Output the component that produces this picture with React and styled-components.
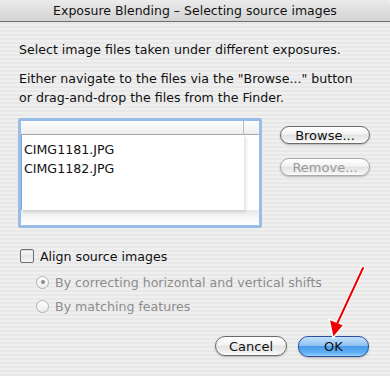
import React from 'react';
import styled, { createGlobalStyle } from 'styled-components';

const Global = createGlobalStyle`
  html, body { margin: 0; padding: 0; }
  body { font-family: 'DejaVu Sans', 'Liberation Sans', sans-serif; }
`;

const Window = styled.div`
  position: relative;
  width: 390px;
  height: 376px;
  display: flex;
  flex-direction: column;
  background: repeating-linear-gradient(#efefef 0 2px, #e8e8e8 2px 4px);
  overflow: hidden;
`;

const TitleBar = styled.div`
  height: 21px;
  flex: none;
  display: flex;
  align-items: center;
  justify-content: center;
  background: linear-gradient(#ebebeb, #d3d3d3);
  border-bottom: 1px solid #6e6e6e;
  border-radius: 5px 5px 0 0;
  font-size: 12.5px;
  color: #111;
`;

const Body = styled.div`
  flex: 1;
  display: flex;
  flex-direction: column;
  padding: 18px 20px 0 19px;
  font-size: 12.6px;
  color: #111;
`;

const Para = styled.p`
  margin: 0 0 ${p => p.$gap || 0}px;
  line-height: 19px;
  white-space: nowrap;
`;

const FileRow = styled.div`
  display: flex;
  align-items: flex-start;
  margin-top: 11px;
`;

const ListBox = styled.div`
  width: 238px;
  height: 104px;
  margin-left: -1px;
  border: 3px solid #98bde6;
  border-radius: 2px;
  display: grid;
  grid-template-columns: 1fr 15px;
  grid-template-rows: 14px 1fr 15px;
  background: #fff;
  box-shadow: inset 0 0 0 1px #7fa6d4;
`;

const HeaderCell = styled.div`
  background: linear-gradient(#fcfcfc, #eeeeee);
  border-bottom: 1px solid #a8a8a8;
  border-right: ${p => (p.$last ? 'none' : '1px solid #b8b8b8')};
`;

const Items = styled.div`
  padding: 5px 0 0 3px;
  line-height: 19px;
  box-shadow: 2px 2px 3px rgba(0, 0, 0, 0.12);
  position: relative;
  z-index: 1;
`;

const Side = styled.div`
  background: #fff;
`;

const Bottom = styled.div`
  grid-column: 1 / 3;
  background: linear-gradient(#e8e8e8, #fafafa 60%, #fff);
`;

const ButtonCol = styled.div`
  display: flex;
  flex-direction: column;
  gap: 14px;
  margin-left: 18px;
  margin-top: 8px;
`;

const Pill = styled.button`
  width: ${p => p.$w || 90}px;
  height: ${p => p.$h || 18}px;
  border-radius: 10px;
  border: 1px solid ${p => (p.$primary ? '#2a4f9e' : p.disabled ? '#a9a9a9' : '#6a6a6a')};
  background: ${p =>
    p.$primary
      ? 'linear-gradient(#c4e0fb 0%, #8ec3f3 45%, #4b9ae9 50%, #63b3f6 85%, #9bd4fb 100%)'
      : 'linear-gradient(#ffffff 0%, #f3f3f3 45%, #e2e2e2 50%, #f1f1f1 85%, #ffffff 100%)'};
  color: ${p => (p.disabled ? '#9a9a9a' : '#111')};
  font-family: inherit;
  font-size: 13px;
  padding: 0;
  line-height: 1;
  box-shadow: 0 1px 2px rgba(0, 0, 0, 0.25);
`;

const Options = styled.div`
  display: flex;
  flex-direction: column;
  margin-top: 18px;
`;

const CheckRow = styled.label`
  display: flex;
  align-items: center;
  gap: 6px;
  height: 20px;
  margin: 0 0 4px 1px;
`;

const CheckBox = styled.span`
  width: 12px;
  height: 12px;
  border: 1px solid #707070;
  border-radius: 2px;
  background: linear-gradient(#ffffff, #e6e6e6 50%, #f6f6f6);
  box-shadow: inset 0 1px 1px rgba(0, 0, 0, 0.15);
`;

const RadioRow = styled.label`
  display: flex;
  align-items: center;
  gap: 6px;
  height: 24px;
  margin-left: 17px;
  color: #8c8c8c;
`;

const Radio = styled.span`
  width: 11px;
  height: 11px;
  border-radius: 50%;
  border: 1px solid #b0b0b0;
  background: linear-gradient(#ffffff, #ececec);
  display: flex;
  align-items: center;
  justify-content: center;

  &::after {
    content: '';
    width: 4px;
    height: 4px;
    border-radius: 50%;
    background: ${p => (p.$on ? '#8a8a8a' : 'transparent')};
  }
`;

const Footer = styled.div`
  display: flex;
  justify-content: flex-end;
  gap: 11px;
  margin-top: auto;
  padding: 0 1px 19px 0;
`;

const Arrow = styled.svg`
  position: absolute;
  left: 0;
  top: 0;
  pointer-events: none;
`;

export default function App() {
  return (
    <Window>
      <Global />
      <TitleBar>Exposure Blending – Selecting source images</TitleBar>
      <Body>
        <Para $gap={10}>Select image files taken under different exposures.</Para>
        <Para>
          Either navigate to the files via the "Browse..." button
          <br />
          or drag-and-drop the files from the Finder.
        </Para>
        <FileRow>
          <ListBox>
            <HeaderCell />
            <HeaderCell $last />
            <Items>
              CIMG1181.JPG
              <br />
              CIMG1182.JPG
            </Items>
            <Side />
            <Bottom />
          </ListBox>
          <ButtonCol>
            <Pill>Browse...</Pill>
            <Pill disabled>Remove...</Pill>
          </ButtonCol>
        </FileRow>
        <Options>
          <CheckRow>
            <CheckBox />
            Align source images
          </CheckRow>
          <RadioRow>
            <Radio $on />
            By correcting horizontal and vertical shifts
          </RadioRow>
          <RadioRow>
            <Radio />
            By matching features
          </RadioRow>
        </Options>
        <Footer>
          <Pill $w={72} $h={20}>Cancel</Pill>
          <Pill $w={71} $h={21} $primary>OK</Pill>
        </Footer>
      </Body>
      <Arrow width="390" height="376" viewBox="0 0 390 376">
        <line x1="363" y1="268" x2="336" y2="326" stroke="#fff" strokeWidth="4" strokeLinecap="round" />
        <polygon points="333,338 329,319 344,325" fill="#e00" stroke="#fff" strokeWidth="1.5" strokeLinejoin="round" />
        <line x1="363" y1="268" x2="337" y2="324" stroke="#e00" strokeWidth="2" strokeLinecap="round" />
      </Arrow>
    </Window>
  );
}
